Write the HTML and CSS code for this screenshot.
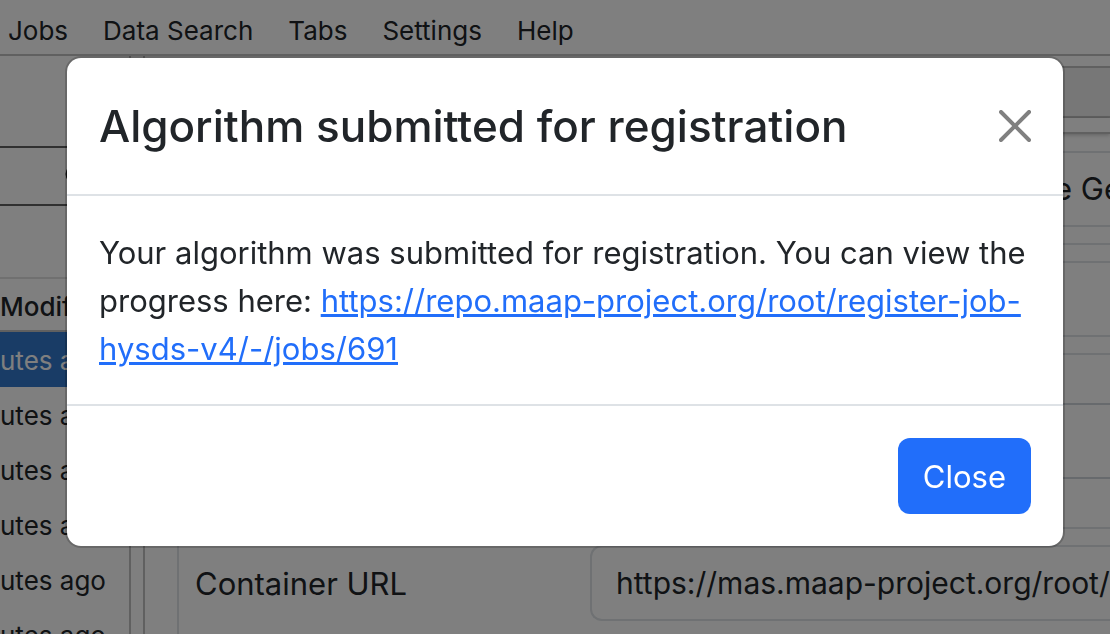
FILE: index.html
```html
<!DOCTYPE html>
<html lang="en">
<head>
<meta charset="utf-8">
<title>Algorithm submitted for registration</title>
<link rel="stylesheet" href="styles.css">
</head>
<body>
<div class="app">
  <nav class="menubar">
    <button class="menu" type="button">Jobs</button>
    <button class="menu" type="button">Data Search</button>
    <button class="menu" type="button">Tabs</button>
    <button class="menu" type="button">Settings</button>
    <button class="menu" type="button">Help</button>
  </nav>
  <div class="workspace">
    <aside class="files">
      <div class="filter">
        <svg class="filter-icon" viewBox="0 0 24 24" aria-hidden="true"><circle cx="10" cy="10" r="8"/><path d="M16 16l7 7"/></svg>
      </div>
      <div class="files-head">Modif</div>
      <ul class="files-list">
        <li class="file selected">utes ago</li>
        <li class="file">utes ago</li>
        <li class="file">utes ago</li>
        <li class="file">utes ago</li>
        <li class="file">utes ago</li>
        <li class="file">utes ago</li>
      </ul>
    </aside>
    <main class="document">
      <div class="tabs"></div>
      <div class="toolbar"></div>
      <div class="form">
        <div class="row first"><span></span><div class="field"><span class="field-end">e Ge</span></div></div>
        <div class="row"><span></span><div class="field"></div></div>
        <div class="section"></div>
        <div class="row framed">
          <label class="label" for="container">Container URL</label>
          <input class="field" id="container" type="text" value="https://mas.maap-project.org/root/">
        </div>
      </div>
    </main>
  </div>
</div>
<div class="backdrop">
  <section class="modal" role="dialog" aria-modal="true" aria-labelledby="modal-title">
    <header class="modal-header">
      <h1 class="modal-title" id="modal-title">Algorithm submitted for registration</h1>
      <button class="dismiss" type="button" aria-label="Dismiss">
        <svg class="dismiss-icon" viewBox="0 0 16 16" aria-hidden="true"><path d="M.293.293a1 1 0 0 1 1.414 0L8 6.586 14.293.293a1 1 0 1 1 1.414 1.414L9.414 8l6.293 6.293a1 1 0 0 1-1.414 1.414L8 9.414l-6.293 6.293a1 1 0 0 1-1.414-1.414L6.586 8 .293 1.707a1 1 0 0 1 0-1.414z"/></svg>
      </button>
    </header>
    <p class="modal-body">Your algorithm was submitted for registration. You can view the progress here: <a class="link" href="https://repo.maap-project.org/root/register-job-hysds-v4/-/jobs/691">https://repo.maap-project.org/root/register-job-hysds-v4/-/jobs/691</a></p>
    <footer class="modal-footer">
      <button class="close" type="button">Close</button>
    </footer>
  </section>
</div>
</body>
</html>
```
FILE: styles.css
```css
* { box-sizing: border-box; }

body {
  margin: 0;
  height: 100vh;
  overflow: hidden;
  font-family: Inter, "Liberation Sans", sans-serif;
  color: #212529;
  background: #fff;
}

button, input { font: inherit; color: inherit; }

.app {
  display: flex;
  flex-direction: column;
  height: 100vh;
  overflow: hidden;
}

.menubar {
  display: flex;
  flex: none;
  gap: 35px;
  padding: 6px 8px 0;
  height: 56px;
  border-bottom: 2px solid #c0c0c0;
}

.menu {
  padding: 0;
  border: 0;
  background: none;
  font-size: 26px;
}

.workspace {
  display: flex;
  flex: 1;
  min-height: 0;
  gap: 12px;
}

.files {
  flex: none;
  width: 131px;
  overflow: hidden;
  border-right: 2px solid #c0c0c0;
  font-size: 26px;
}

.filter {
  display: flex;
  align-items: center;
  justify-content: center;
  height: 60px;
  margin: 90px 0 71px;
  padding-left: 24px;
  border: solid #616161;
  border-width: 2px 0;
}

.filter-icon {
  width: 24px;
  fill: none;
  stroke: #212121;
  stroke-width: 3;
}

.files-head {
  height: 55px;
  border: solid #e0e0e0;
  border-width: 2px 0;
  border-bottom-color: #c0c0c0;
  line-height: 56px;
  font-weight: 500;
}

.files-list {
  margin: 0;
  padding: 0;
  list-style: none;
}

.file {
  height: 55px;
  line-height: 57px;
  white-space: nowrap;
}

.selected {
  background: #3278cc;
  color: #fff;
}

.document {
  flex: 1;
  min-width: 0;
  overflow: hidden;
  border-left: 2px solid #c0c0c0;
}

.tabs {
  height: 52px;
  margin-top: 10px;
  border: solid #c0c0c0;
  border-width: 2px 0;
  background: #eee;
}

.toolbar {
  height: 16px;
  border-bottom: 2px solid #c0c0c0;
  box-shadow: 0 1px 4px rgba(0, 0, 0, .24);
}

.form {
  margin-left: 32px;
  font-size: 31px;
}

.row {
  display: grid;
  grid-template-columns: 395px 1fr;
  align-items: center;
  padding: 16px 0 16px 16px;
  border-bottom: 2px solid #dee2e6;
}

.first { padding-top: 17px; }

.framed {
  border-top: 2px solid #dee2e6;
  border-left: 2px solid #dee2e6;
}

.field {
  width: 100%;
  min-width: 0;
  height: 76px;
  padding: 0 0 0 24px;
  border: 2px solid #dee2e6;
  border-right: 0;
  border-radius: 12px 0 0 12px;
  background: #fff;
  font-size: 30px;
  line-height: 72px;
  overflow: hidden;
}

div.field {
  display: flex;
  justify-content: flex-end;
}

.field-end {
  flex: none;
  margin-right: -12px;
  font-size: 31px;
}

.section {
  height: 76px;
  margin: 48px 0;
  border: solid #ced4da;
  border-width: 2px 0;
}

.backdrop {
  position: fixed;
  inset: 0;
  padding: 56px 45px 56px 65px;
  background: rgba(0, 0, 0, .5);
}

.modal {
  border: 2px solid rgba(0, 0, 0, .18);
  border-radius: 16px;
  background: #fff;
  background-clip: padding-box;
}

.modal-header {
  display: flex;
  align-items: center;
  justify-content: space-between;
  padding: 32px;
  border-bottom: 2px solid #dee2e6;
}

.modal-title {
  margin: 0;
  font-size: 44px;
  font-weight: 550;
  line-height: 72px;
}

.dismiss {
  display: flex;
  padding: 0;
  border: 0;
  background: none;
}

.dismiss-icon {
  width: 32px;
  fill: #808080;
}

.modal-body {
  margin: 0;
  padding: 33px 32px 31px;
  font-size: 31px;
  line-height: 48px;
}

.link { color: #216efa; }

.modal-footer {
  display: flex;
  justify-content: flex-end;
  padding: 32px;
  border-top: 2px solid #dee2e6;
}

.close {
  height: 76px;
  padding: 0 25px;
  border: 0;
  border-radius: 12px;
  background: #216efa;
  color: #fff;
  font-size: 31px;
}
```
